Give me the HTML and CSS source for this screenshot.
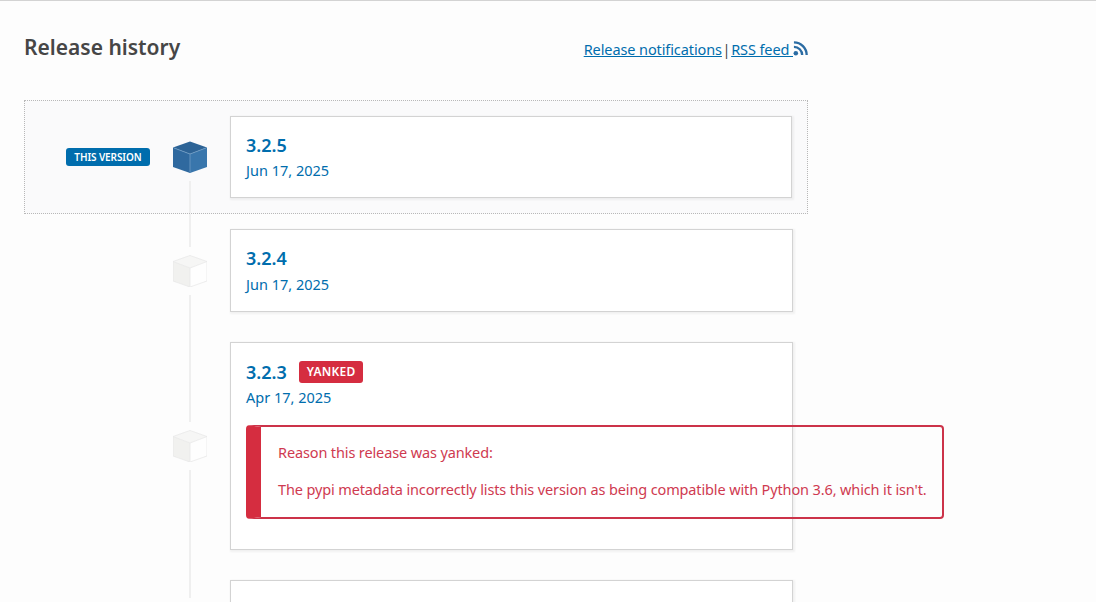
FILE: index.html
```html
<!DOCTYPE html>
<html lang="en">
<head>
<meta charset="utf-8">
<title>Release history</title>
<link rel="stylesheet" href="styles.css">
</head>
<body>
<main class="page">
  <header class="history-head">
    <h2 class="history-title">Release history</h2>
    <p class="history-links">
      <a href="#">Release notifications</a> | <a href="#">RSS feed </a><svg class="rss" viewBox="0 0 16 16" width="15" height="15" aria-hidden="true"><circle cx="3" cy="13" r="2.4" fill="#2b6ca3"/><path d="M1 6.2a8.8 8.8 0 0 1 8.8 8.8M1 1.4A13.6 13.6 0 0 1 14.6 15" fill="none" stroke="#2b6ca3" stroke-width="2.5"/></svg>
    </p>
  </header>

  <section class="timeline">
    <div class="release current">
      <div class="marker">
        <span class="this-version">This version</span>
        <div class="rail">
          <span class="line hidden"></span>
          <svg class="cube" viewBox="0 0 34 32" width="34" height="32" aria-hidden="true">
            <path d="M17 .5 34 6.5 17 13 0 6.5Z" fill="#2d6396"/>
            <path d="M0 6.5 17 13V32L0 26Z" fill="#2f699f"/>
            <path d="M34 6.5 17 13V32L34 26Z" fill="#3976ac"/>
            <path d="M1 7 17 13 33 7M17 13V31" fill="none" stroke="#6f9cc4" stroke-width=".8"/>
          </svg>
          <span class="line"></span>
        </div>
      </div>
      <a class="card" href="#">
        <p class="version">3.2.5</p>
        <p class="date">Jun 17, 2025</p>
      </a>
    </div>

    <div class="release">
      <div class="marker">
        <div class="rail">
          <span class="line"></span>
          <svg class="cube" viewBox="0 0 34 32" width="34" height="32" aria-hidden="true">
            <path d="M17 .5 34 6.5 17 13 0 6.5Z" fill="#f6f6f5"/>
            <path d="M0 6.5 17 13V32L0 26Z" fill="#f1f1ef"/>
            <path d="M34 6.5 17 13V32L34 26Z" fill="#fefefe"/>
            <path d="M17 .5 34 6.5V26L17 32 0 26V6.5ZM0 6.5 17 13 34 6.5M17 13V32" fill="none" stroke="#e8e8e8" stroke-width=".8"/>
          </svg>
          <span class="line"></span>
        </div>
      </div>
      <a class="card" href="#">
        <p class="version">3.2.4</p>
        <p class="date">Jun 17, 2025</p>
      </a>
    </div>

    <div class="release">
      <div class="marker">
        <div class="rail">
          <span class="line"></span>
          <svg class="cube" viewBox="0 0 34 32" width="34" height="32" aria-hidden="true">
            <path d="M17 .5 34 6.5 17 13 0 6.5Z" fill="#f6f6f5"/>
            <path d="M0 6.5 17 13V32L0 26Z" fill="#f1f1ef"/>
            <path d="M34 6.5 17 13V32L34 26Z" fill="#fefefe"/>
            <path d="M17 .5 34 6.5V26L17 32 0 26V6.5ZM0 6.5 17 13 34 6.5M17 13V32" fill="none" stroke="#e8e8e8" stroke-width=".8"/>
          </svg>
          <span class="line"></span>
        </div>
      </div>
      <a class="card" href="#">
        <p class="version version-yanked">3.2.3 <span class="yanked">Yanked</span></p>
        <p class="date">Apr 17, 2025</p>
        <div class="reason">
          <p>Reason this release was yanked:</p>
          <p>The pypi metadata incorrectly lists this version as being compatible with Python 3.6, which it isn't.</p>
        </div>
      </a>
    </div>

    <div class="release last">
      <div class="marker">
        <div class="rail">
          <span class="line"></span>
        </div>
      </div>
      <div class="card card-empty"></div>
    </div>
  </section>
</main>
</body>
</html>
```

FILE: styles.css
```css
* { box-sizing: border-box; }
html { overflow: hidden; height: 100%; }
body {
  margin: 0;
  border-top: 1px solid #d3d3d3;
  background: #fdfdfd;
  color: #464646;
  font-family: "Noto Sans", sans-serif;
  font-size: 14.5px;
  line-height: 24px;
}
.page {
  width: 832px;
  padding: 0 24px;
}
.history-head {
  display: flex;
  justify-content: space-between;
  align-items: flex-end;
  height: 99px;
  padding: 30px 0 38px;
}
.history-title {
  margin: 0;
  font-size: 21px;
  line-height: 30px;
  font-weight: 600;
}
.history-links {
  margin: 0 0 1px;
  display: flex;
  align-items: center;
  white-space: pre;
  letter-spacing: -.1px;
  word-spacing: -3px;
}
.history-links a { color: #006dad; word-spacing: 0; }
.rss { display: block; margin-top: -2px; }
.release { display: flex; }
.release.current {
  border: 1px dotted #b8b8b8;
  background: #fafafb;
}
.release:not(.current) { padding-left: 1px; }
.marker {
  width: 205px;
  flex: none;
  display: flex;
  justify-content: flex-end;
  align-items: center;
  padding-right: 23px;
}
.this-version {
  margin-right: 23px;
  padding: 0 8.5px;
  height: 18px;
  border-radius: 3px;
  background: #006dad;
  color: #fff;
  font-size: 10px;
  font-weight: 600;
  letter-spacing: -.1px;
  line-height: 18px;
  text-transform: uppercase;
  white-space: nowrap;
}
.rail {
  align-self: stretch;
  width: 34px;
  display: flex;
  flex-direction: column;
  align-items: center;
  gap: 8px;
}
.line { flex: 1; width: 2px; background: #efefef; }
.line.hidden { visibility: hidden; }
.cube { display: block; flex: none; }
.card {
  display: block;
  width: 563px;
  margin: 15px 0;
  padding: 15px;
  border: 1px solid #d3d3d3;
  background: #fff;
  box-shadow: 1px 1px 2px 1px rgba(0,0,0,.05);
  color: #006dad;
  text-decoration: none;
}
.current .card { width: 562px; margin-right: 15px; }
.card-empty { height: 82px; }
.last .line { flex: none; height: 33px; }
.version {
  margin: 0;
  font-size: 18px;
  font-weight: 600;
  line-height: 26.4px;
}
.version-yanked {
  display: flex;
  align-items: center;
  gap: 12px;
  height: 28px;
  margin-bottom: -1px;
}
.date { margin: 0; line-height: 24px; }
.yanked {
  padding: 0 8px;
  border-radius: 3px;
  background: #d52d40;
  color: #fff;
  font-size: 12px;
  font-weight: 600;
  letter-spacing: .2px;
  line-height: 22px;
  text-transform: uppercase;
}
.reason {
  width: 698px;
  margin-top: 16px;
  margin-bottom: 15px;
  padding: 13px 10px 16px 17px;
  border: 2px solid #cc3349;
  border-left: 15px solid #d52d40;
  border-radius: 4px;
  color: #cf3a50;
  letter-spacing: -.13px;
}
.reason p { margin: 0; }
.reason p + p { margin-top: 13px; }
```
